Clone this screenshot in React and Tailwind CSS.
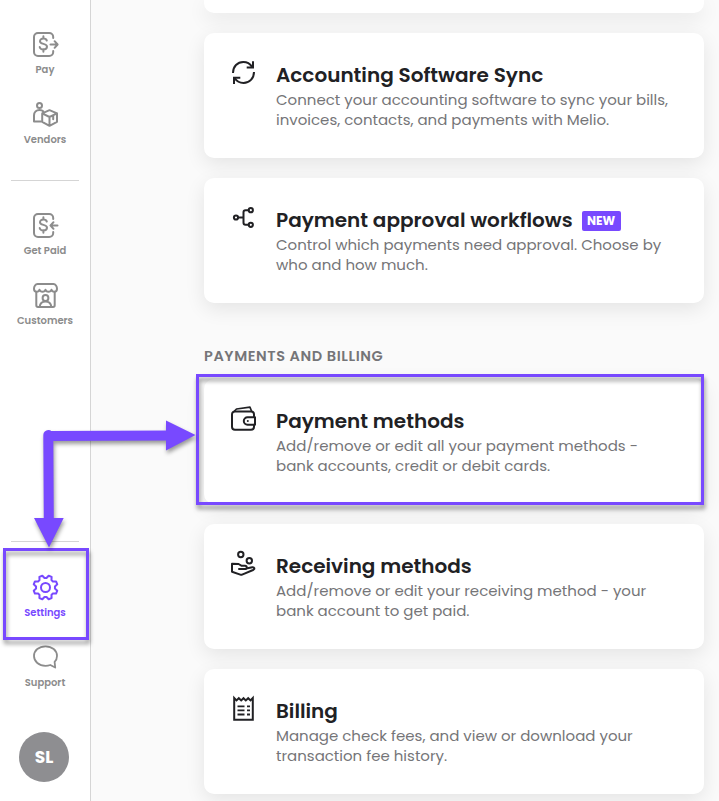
const Dollar = () => (
    <path d="M14.8 9.6c-.4-1.3-1.6-2-3.4-2-2 0-3.400.9-3.400 2.600 0 3.600 7 1.800 7 5.500 0 1.700-1.500 2.700-3.600 2.700-2 0-3.400-.9-3.700-2.300M11.400 5.200v2.300M11.400 18.300v2.500" />
)

const NavIcon = ({ children }) => (
    <svg className="size-[27px] shrink-0" viewBox="0 0 27 27" fill="none" stroke="currentColor" strokeWidth="2" strokeLinecap="round" strokeLinejoin="round">
        {children}
    </svg>
)

const PayIcon = () => (
    <NavIcon>
        <path d="M21.200 7V6a4 4 0 0 0-4-4H6a4 4 0 0 0-4 4v15a4 4 0 0 0 4 4h11.200a4 4 0 0 0 4-4v-1" />
        <Dollar />
        <path d="M18.500 13.500h7M22.600 10.200l3 3.300-3 3.300" />
    </NavIcon>
)

const GetPaidIcon = () => (
    <NavIcon>
        <path d="M21.200 7V6a4 4 0 0 0-4-4H6a4 4 0 0 0-4 4v15a4 4 0 0 0 4 4h11.200a4 4 0 0 0 4-4v-1" />
        <Dollar />
        <path d="M18.500 13.500h7M21.500 10.200l-3 3.300 3 3.300" />
    </NavIcon>
)

const VendorsIcon = () => (
    <NavIcon>
        <circle cx="7.500" cy="4.400" r="2.500" />
        <path d="M9 20.500H2v-6c0-3.300 2.300-5.500 5.500-5.500 1.600 0 3 .5 3.900 1.500" />
        <path d="M17.500 9.200l7.500 3.200v8.400l-7.500 4-7.300-4v-8.400zM10.200 12.400l7.300 3.600 7.500-3.600M17.500 16v8.500M21.200 14.500v3.800" />
    </NavIcon>
)

const CustomersIcon = () => (
    <NavIcon>
        <path d="M5.500 2h16c2 0 3.500 2.500 3.500 4.700 0 1.800-1 3-2.600 3-1.500 0-2.600-.8-2.900-2-.4 1.200-1.400 2-3 2s-2.700-.8-3-2c-.4 1.200-1.400 2-3 2s-2.600-.8-3-2c-.3 1.200-1.400 2-2.900 2-1.600 0-2.600-1.200-2.600-3C2 4.500 3.500 2 5.500 2z" />
        <path d="M4.300 10v13.300c0 .9.700 1.700 1.700 1.700h15c1 0 1.700-.8 1.700-1.700V10" />
        <circle cx="13.500" cy="16" r="2.900" />
        <path d="M7.600 24.800c.5-3.300 2.800-5.200 5.900-5.200s5.400 1.900 5.900 5.200" />
    </NavIcon>
)

// eight teeth, with a valley at the top
const gearPoints = Array.from({ length: 8 }, (_, i) => i * 45)
    .flatMap((a) => [[a - 6, 9.5], [a + 6, 9.5], [a + 15, 12.2], [a + 30, 12.2]])
    .map(([a, r]) => {
        const t = (a * Math.PI) / 180
        return (13.5 + r * Math.sin(t)).toFixed(2) + "," + (13.5 - r * Math.cos(t)).toFixed(2)
    })
    .join(" ")

const SettingsIcon = () => (
    <NavIcon>
        <circle cx="13.500" cy="13.500" r="4.500" />
        <polygon points={gearPoints} />
    </NavIcon>
)

const SupportIcon = () => (
    <NavIcon>
        <path strokeWidth="1.800" d="M13.500 2.300C7 2.300 2 6.400 2 12s5 9.800 11.500 9.800c1.700 0 3.300-.3 4.800-.8l4.900 2.500-.6-5.700c1.600-1.500 2.400-3.600 2.400-5.800 0-5.600-5-9.700-11.500-9.700z" />
    </NavIcon>
)

const CardIcon = ({ children }) => (
    <svg className="size-7 shrink-0" viewBox="0 0 28 28" fill="none" stroke="currentColor" strokeWidth="2" strokeLinecap="round" strokeLinejoin="round">
        {children}
    </svg>
)

const SyncIcon = () => (
    <CardIcon>
        <path strokeLinecap="butt" d="M3 14C3 7.500 7.500 3 13.300 3c3.700 0 6.800 1.800 8.800 4.900M24 13C24 19.400 19.400 24 13.500 24c-3.700 0-6.900-1.800-8.800-4.700" />
        <path strokeLinecap="butt" strokeLinejoin="miter" d="M23 2.300v6.200h-6.300M4 25v-6.200h6.300" />
    </CardIcon>
)

const WorkflowIcon = () => (
    <CardIcon>
        <circle cx="6" cy="13.500" r="2.100" />
        <circle cx="20.800" cy="6.200" r="2.100" />
        <circle cx="20.800" cy="20.800" r="2.100" />
        <path d="M8.200 13.500h5.300M18.600 6.200h-3.100c-1.300 0-2 .7-2 2v10.600c0 1.300.7 2 2 2h3.100" />
    </CardIcon>
)

const WalletIcon = () => (
    <CardIcon>
        <path d="M24 11.500V9.500c0-1.900-1.200-3-3-3H5C3.200 6.500 2 7.600 2 9.500v12.200c0 1.800 1.200 3 3 3h16c1.800 0 3-1.200 3-3v-2" />
        <path strokeWidth="1.700" d="M4.500 6L6.500 4 20 2.200 21.500 6" />
        <path d="M25 12.300h-7.500a3.700 3.700 0 0 0 0 7.400H25z" />
        <circle cx="17.800" cy="16" r="1" fill="currentColor" stroke="none" />
    </CardIcon>
)

const ReceiveIcon = () => (
    <CardIcon>
        <circle cx="10.800" cy="4.500" r="2.700" />
        <circle cx="19.300" cy="10.700" r="2.700" />
        <path d="M9 19h6c2.300 0 2.300-3.200 0-3.200h-3.300L8.600 14 2 13.800v8l8.300 2.800c.7.200 1.200.2 1.800 0l11-4.600c2-.9 1.300-3.200-.8-2.800l-6 1.300" />
    </CardIcon>
)

const BillIcon = () => (
    <CardIcon>
        <path strokeLinecap="butt" strokeLinejoin="miter" d="M4.200 3v21.800h18.600V3l-2.300 2.400-2.300-2.200-2.400 2.200-2.300-2.200-2.300 2.200-2.400-2.200-2.300 2.200z" />
        <path strokeLinecap="butt" strokeWidth="1.800" d="M7.500 11.300h7M7.500 15.400h7M7.500 19.500h7M17 11.300h3M17 15.400h3M17 19.500h3" />
    </CardIcon>
)

function NavItem({ icon, label, active }) {
    return (
        <div className={active ? "flex h-[70px] flex-col items-center pt-[11px] text-[#7849ff]" : "flex h-[70px] flex-col items-center pt-[11px] text-[#8c8c8c]"}>
            {icon}
            <span className="mt-1 text-[10px] leading-4 font-semibold">{label}</span>
        </div>
    )
}

function Card({ icon, title, badge, lines }) {
    return (
        <div className="flex h-[125px] w-[500px] shrink-0 gap-[18px] rounded-[10px] bg-white pt-[26px] pl-[26px] text-[#212124] shadow-[0_6px_20px_rgba(0,0,0,0.09)]">
            {icon}
            <div className="pt-[2px]">
                <div className="mb-px flex h-[28px] items-center">
                    <h2 className="text-[20px] font-semibold">{title}</h2>
                    {badge && <span className="mt-px ml-[9px] flex h-5 w-[39px] items-center justify-center rounded-[2px] bg-[#7849ff] text-[12px] font-bold text-white">{badge}</span>}
                </div>
                {lines.map((line) => (
                    <p key={line} className="h-5 text-[15px] leading-5 whitespace-nowrap text-[#757578]">{line}</p>
                ))}
            </div>
        </div>
    )
}

export default function App() {
    return (
        <div className="relative flex h-[801px] w-[719px] overflow-hidden bg-[#fafafa] font-['Poppins','Inter',sans-serif]">
            <aside className="flex w-[91px] shrink-0 flex-col border-r border-[#d5d5d5] bg-white pt-[20px]">
                <NavItem icon={<PayIcon />} label="Pay" />
                <NavItem icon={<VendorsIcon />} label="Vendors" />
                <div className="mx-[11px] my-[20px] h-px shrink-0 bg-[#d5d5d5]" />
                <NavItem icon={<GetPaidIcon />} label="Get Paid" />
                <NavItem icon={<CustomersIcon />} label="Customers" />
                <div className="mx-[11px] mt-[200px] mb-[21px] h-px shrink-0 bg-[#d5d5d5]" />
                <NavItem icon={<SettingsIcon />} label="Settings" active />
                <NavItem icon={<SupportIcon />} label="Support" />
                <div className="mt-[29px] ml-[19px] flex size-[50px] shrink-0 items-center justify-center rounded-full bg-[#8e8e91] pt-px text-[17px] font-bold text-white">SL</div>
            </aside>

            <main className="flex flex-col pl-[113px]">
                <div className="flex flex-col gap-5">
                    <div className="h-[13px] w-[500px] rounded-b-[10px] bg-white shadow-[0_6px_20px_rgba(0,0,0,0.09)]" />
                    <Card
                        icon={<SyncIcon />}
                        title="Accounting Software Sync"
                        lines={["Connect your accounting software to sync your bills,", "invoices, contacts, and payments with Melio."]}
                    />
                    <Card
                        icon={<WorkflowIcon />}
                        title="Payment approval workflows"
                        badge="NEW"
                        lines={["Control which payments need approval. Choose by", "who and how much."]}
                    />
                </div>
                <h3 className="mt-[43px] mb-[13px] h-5 text-[14.5px] leading-5 font-semibold tracking-[0.57px] text-[#757578]">PAYMENTS AND BILLING</h3>
                <div className="flex flex-col gap-5">
                    <Card
                        icon={<WalletIcon />}
                        title="Payment methods"
                        lines={["Add/remove or edit all your payment methods -", "bank accounts, credit or debit cards."]}
                    />
                    <Card
                        icon={<ReceiveIcon />}
                        title="Receiving methods"
                        lines={["Add/remove or edit your receiving method - your", "bank account to get paid."]}
                    />
                    <Card
                        icon={<BillIcon />}
                        title="Billing"
                        lines={["Manage check fees, and view or download your", "transaction fee history."]}
                    />
                </div>
            </main>

            {/* callouts */}
            <div className="absolute top-[374px] left-[196px] h-[131px] w-[508px] border-3 border-[#7849ff] drop-shadow-[1px_4px_2px_rgba(0,0,0,0.4)]" />
            <div className="absolute top-[548px] left-[3px] h-[92px] w-[86px] border-3 border-[#7849ff] drop-shadow-[1px_4px_2px_rgba(0,0,0,0.4)]" />
            <svg className="absolute top-[420px] left-[30px] drop-shadow-[1px_3px_2px_rgba(0,0,0,0.4)]" width="170" height="132" viewBox="30 420 170 132" fill="#7849ff">
                <path d="M48.300 435L48.800 520M48.300 436L170 435.500" stroke="#7849ff" strokeWidth="10" strokeLinecap="round" />
                <path d="M166 420.500L195.500 435 166 450.500zM34 518H63.700L49 547.500z" />
            </svg>
        </div>
    )
}
